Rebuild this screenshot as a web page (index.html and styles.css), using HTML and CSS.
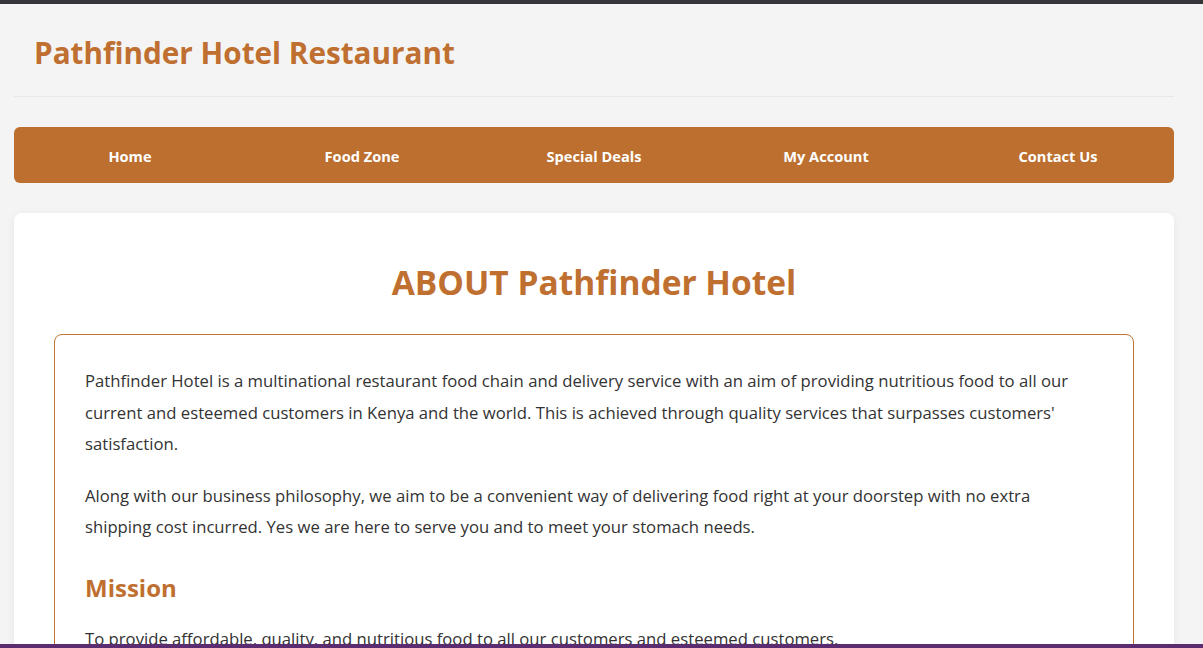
FILE: index.html
```html
<!DOCTYPE html>
<html lang="en">
<head>
<meta charset="utf-8">
<title>Pathfinder Hotel Restaurant</title>
<link rel="stylesheet" href="styles.css">
</head>
<body>
<div class="topbar"></div>
<div class="page">
  <header class="site-header">
    <h1 class="brand">Pathfinder Hotel Restaurant</h1>
  </header>
  <nav class="nav">
    <a class="nav-link" href="#">Home</a>
    <a class="nav-link" href="#">Food Zone</a>
    <a class="nav-link" href="#">Special Deals</a>
    <a class="nav-link" href="#">My Account</a>
    <a class="nav-link" href="#">Contact Us</a>
  </nav>
  <main class="card">
    <h2 class="card-title">ABOUT Pathfinder Hotel</h2>
    <section class="about-box">
      <p class="about-text">Pathfinder Hotel is a multinational restaurant food chain and delivery service with an aim of providing nutritious food to all our current and esteemed customers in Kenya and the world. This is achieved through quality services that surpasses customers' satisfaction.</p>
      <p class="about-text">Along with our business philosophy, we aim to be a convenient way of delivering food right at your doorstep with no extra shipping cost incurred. Yes we are here to serve you and to meet your stomach needs.</p>
      <h3 class="about-heading">Mission</h3>
      <p class="about-text">To provide affordable, quality, and nutritious food to all our customers and esteemed customers.</p>
    </section>
  </main>
</div>
<div class="bottombar"></div>
</body>
</html>
```

FILE: styles.css
```css
* { box-sizing: border-box; }

html, body {
  margin: 0;
  padding: 0;
}

body {
  background: #f4f4f4;
  font-family: "Open Sans", "Noto Sans", sans-serif;
  color: #333;
}

.topbar {
  position: fixed;
  top: 0;
  left: 0;
  right: 0;
  height: 4px;
  background: #35343a;
  z-index: 10;
}

.bottombar {
  position: fixed;
  bottom: 0;
  left: 0;
  right: 0;
  height: 4px;
  background: #5b2c6f;
  z-index: 10;
}

.page {
  width: 1160px;
  margin: 0 0 0 14px;
  padding-top: 4px;
}

.site-header {
  padding: 29px 20px 23px;
  border-bottom: 1px solid #e8e8e8;
}

.brand {
  margin: 0;
  font-size: 29.7px;
  line-height: 40px;
  font-weight: 700;
  color: #bf6f30;
}

.nav {
  margin-top: 30px;
  display: grid;
  grid-template-columns: repeat(5, 1fr);
  background: #bd6f2f;
  border-radius: 6px;
  height: 56px;
  align-items: center;
}

.nav-link {
  text-align: center;
  color: #fff;
  text-decoration: none;
  font-weight: 700;
  font-size: 14.6px;
  padding-top: 1px;
}

.card {
  margin-top: 30px;
  background: #fff;
  border-radius: 8px;
  box-shadow: 0 2px 10px rgba(0, 0, 0, 0.06);
  padding: 47px 40px 40px;
}

.card-title {
  margin: 0 0 30px;
  text-align: center;
  font-size: 33.5px;
  line-height: 44px;
  font-weight: 700;
  color: #bf6f30;
}

.about-box {
  border: 1px solid #c07432;
  border-radius: 8px;
  padding: 30px 40px 30px 30px;
}

.about-text {
  margin: 0 0 20px;
  font-size: 16.7px;
  line-height: 31.5px;
  color: #333;
}

.about-heading {
  margin: 30px 0 20px;
  font-size: 24px;
  line-height: 30px;
  font-weight: 700;
  color: #bf6f30;
}
```
